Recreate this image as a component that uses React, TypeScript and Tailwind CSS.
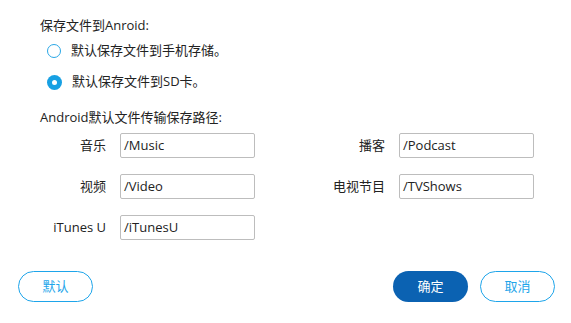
import React from "react";

const font = { fontFamily: '"Segoe UI", "Open Sans", "Noto Sans CJK SC", sans-serif' };

function Radio({ checked, label }: { checked: boolean; label: string }) {
  return (
    <div className="flex items-center h-[20px]">
      {checked ? (
        <span className="w-[15px] h-[15px] rounded-full bg-[#17a0e3] flex items-center justify-center">
          <span className="w-[5px] h-[5px] rounded-full bg-white" />
        </span>
      ) : (
        <span className="w-[14px] h-[14px] rounded-full border-[1.5px] border-[#2aa7e6] bg-white" />
      )}
      <span className="ml-[10px] text-[13px] text-[#222]">{label}</span>
    </div>
  );
}

function Field({ value }: { value: string }) {
  return (
    <div className="w-[135px] h-[25px] border border-[#bdbdbd] rounded-[2px] flex items-center pl-[3px] text-[13px] text-[#222] bg-white">
      {value}
    </div>
  );
}

export default function App() {
  return (
    <div className="w-[571px] h-[323px] bg-white relative" style={font}>
      <div className="pt-[16px] pl-[40px]">
        <div className="h-[18px] leading-[18px] text-[13px] text-[#222]">保存文件到Anroid:</div>
        <div className="pl-[7px] mt-[7px] flex flex-col gap-[11px]">
          <Radio checked={false} label="默认保存文件到手机存储。" />
          <Radio checked={true} label="默认保存文件到SD卡。" />
        </div>
        <div className="mt-[16px] h-[18px] leading-[18px] text-[13px] text-[#222]">Android默认文件传输保存路径:</div>
      </div>
      <div className="mt-[7px] grid grid-cols-[106px_135px_144px_135px] gap-y-[16px] items-center text-[13px] text-[#222]">
        <div className="text-right">音乐</div>
        <div className="ml-[14px]"><Field value="/Music" /></div>
        <div className="text-right">播客</div>
        <div className="ml-[14px]"><Field value="/Podcast" /></div>
        <div className="text-right">视频</div>
        <div className="ml-[14px]"><Field value="/Video" /></div>
        <div className="text-right">电视节目</div>
        <div className="ml-[14px]"><Field value="/TVShows" /></div>
        <div className="text-right">iTunes U</div>
        <div className="ml-[14px]"><Field value="/iTunesU" /></div>
      </div>
      <div className="mt-[31px] px-[16px] flex items-center">
        <button className="w-[75px] h-[31px] rounded-full border border-[#1ea5ea] text-[#1ea5ea] text-[13px] ml-[2px] bg-white">默认</button>
        <div className="flex-1" />
        <button className="w-[75px] h-[31px] rounded-full bg-[#0b62b2] text-white text-[13px]">确定</button>
        <button className="w-[75px] h-[31px] rounded-full border border-[#1ea5ea] text-[#1ea5ea] text-[13px] ml-[12px] bg-white">取消</button>
      </div>
    </div>
  );
}
